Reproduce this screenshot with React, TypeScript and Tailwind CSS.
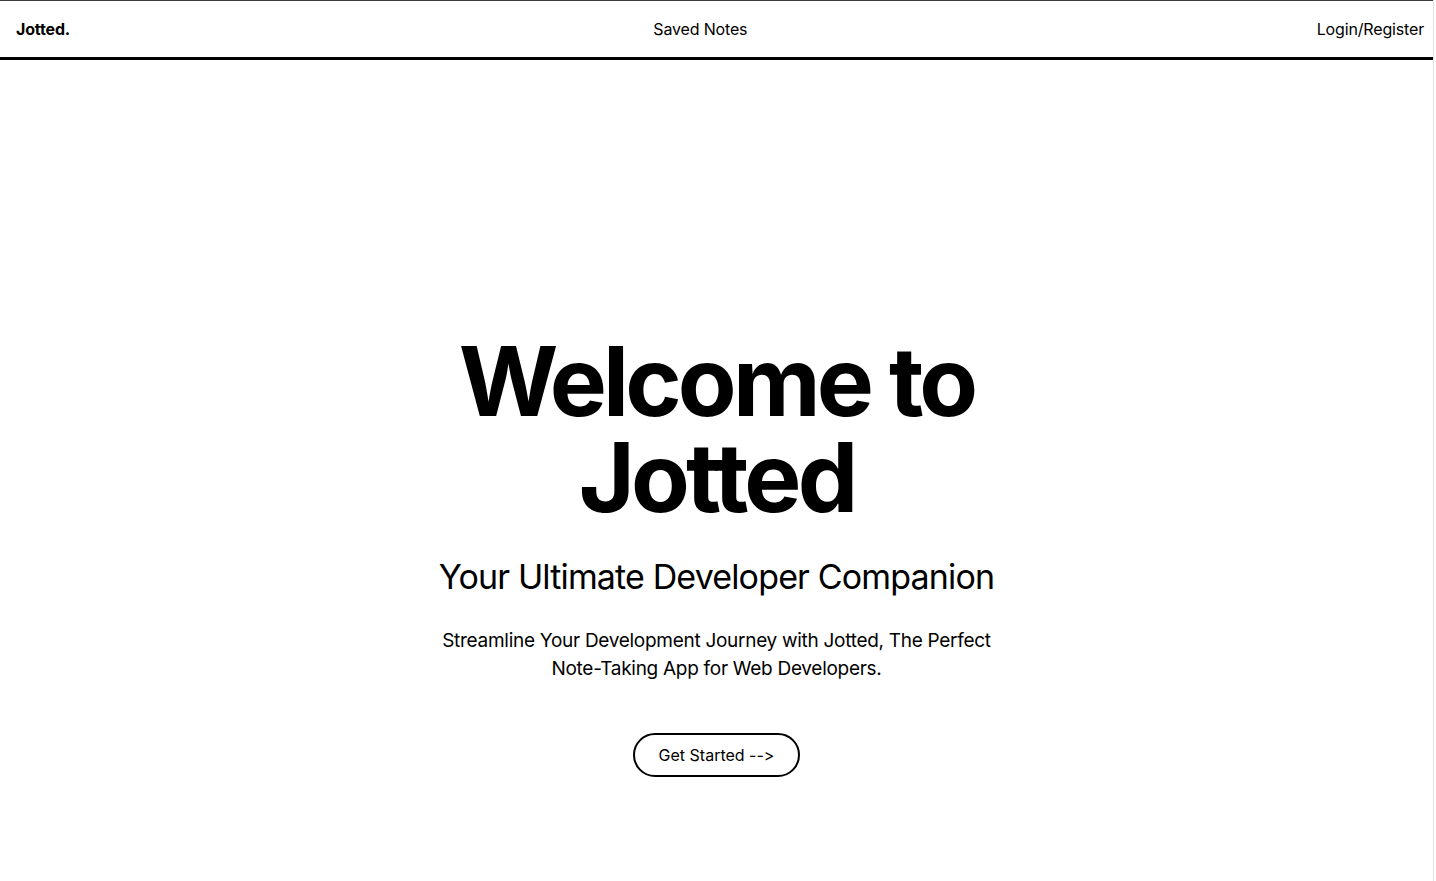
export default function App() {
  return (
    <div className="min-h-screen w-[1434px] bg-white border-r border-[#e3e3e3] text-black font-['Inter','Liberation_Sans',sans-serif] [font-feature-settings:'calt'_0]">
      {/* Navbar */}
      <nav className="flex h-[60px] items-center justify-between border-t border-t-[#3a3a3a] border-b-[3px] border-b-black pl-4 pr-[9px] text-base tracking-[-0.01em]">
        <span className="font-bold">Jotted.</span>
        <a href="#" className="pl-[14px]">Saved Notes</a>
        <a href="#">Login/Register</a>
      </nav>

      {/* Hero */}
      <main className="flex flex-col items-center pt-[273px] text-center">
        <h1 className="text-[96px] font-bold leading-none tracking-[-0.04em]">
          Welcome to
          <br />
          Jotted
        </h1>
        <h2 className="mt-8 text-[34px] leading-10 tracking-[-0.025em]">Your Ultimate Developer Companion</h2>
        <p className="mt-[30px] max-w-[560px] text-[19px] leading-7 tracking-[-0.015em]">
          Streamline Your Development Journey with Jotted, The Perfect Note-Taking App for Web Developers.
        </p>
        <button className="mt-[50px] h-[44px] rounded-full border-2 border-black px-6 text-base">
          Get Started --&gt;
        </button>
      </main>
    </div>
  );
}
